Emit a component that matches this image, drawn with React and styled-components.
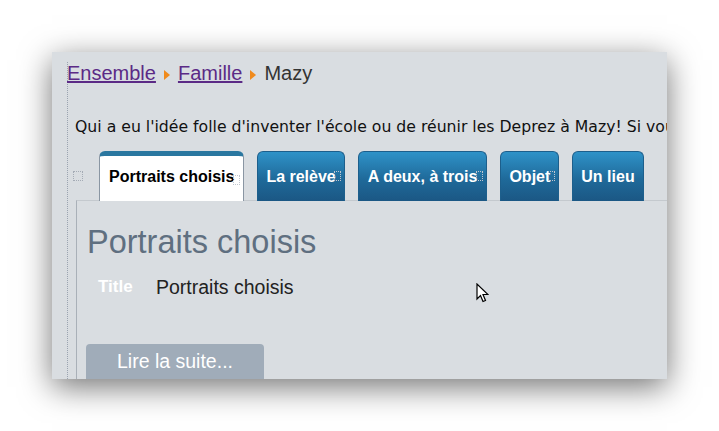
import React from "react";
import styled, { createGlobalStyle } from "styled-components";

const GlobalStyle = createGlobalStyle`
  html, body {
    margin: 0;
    padding: 0;
    background: #ffffff;
  }
  body {
    font-family: "Liberation Sans", Arial, sans-serif;
  }
`;

const Stage = styled.div`
  width: 719px;
  height: 431px;
  padding: 52px 0 0 52px;
  box-sizing: border-box;
  position: relative;
`;

const Window = styled.div`
  width: 615px;
  height: 327px;
  background: #d9dde1;
  box-shadow: 0 8px 30px rgba(0, 0, 0, 0.55);
  overflow: hidden;
  padding: 10px 0 0 15px;
  box-sizing: border-box;
`;

const Page = styled.div`
  border-left: 1px dotted #9aa3b0;
  height: 100%;
  display: flex;
  flex-direction: column;
`;

const Breadcrumb = styled.nav`
  display: flex;
  align-items: center;
  gap: 8px;
  font-size: 20px;
  line-height: 22px;
  color: #333;
  margin-left: -1px;
`;

const Crumb = styled.a`
  color: #5b2a86;
  text-decoration: underline;
`;

const Arrow = styled.span`
  width: 0;
  height: 0;
  border-top: 5px solid transparent;
  border-bottom: 5px solid transparent;
  border-left: 6px solid #f08a1c;
  margin-top: 3px;
`;

const Intro = styled.p`
  margin: 33px 0 0 7px;
  font-family: "DejaVu Sans", Verdana, sans-serif;
  font-size: 15.7px;
  line-height: 19px;
  color: #111;
  white-space: nowrap;
`;

const TabRow = styled.div`
  display: flex;
  align-items: flex-end;
  margin-top: 15px;
  position: relative;
  z-index: 1;
  height: 50px;
`;

const Handle = styled.span`
  width: 8px;
  height: 8px;
  border: 1px dotted #a4abb5;
  align-self: center;
  margin: 0 16px 0 5px;
`;

const Tab = styled.div`
  position: relative;
  height: 50px;
  box-sizing: border-box;
  display: flex;
  align-items: center;
  padding: 0 ${(p) => p.$pad || 9}px;
  margin-right: 13px;
  border-radius: 6px 6px 0 0;
  font-size: 16px;
  font-weight: bold;
  white-space: nowrap;
  color: ${(p) => (p.$active ? "#000" : "#fff")};
  background: ${(p) =>
    p.$active ? "#ffffff" : "linear-gradient(#2f92c8, #1f6a9a 55%, #1b5784)"};
  border: 1px solid ${(p) => (p.$active ? "#8a96a3" : "#1d5f8c")};
  border-top: ${(p) => (p.$active ? "5px solid #2a77a0" : "1px solid #1d5f8c")};
  border-bottom: none;
  padding-bottom: ${(p) => (p.$active ? "3px" : "0")};
`;

const TabHandle = styled.span`
  position: absolute;
  right: 3px;
  top: 19px;
  width: 5px;
  height: 8px;
  border: 1px dotted #c0c6cf;
`;

const Content = styled.section`
  margin: -1px 0 0 8px;
  border-left: 1px solid #a9b0b8;
  border-top: 1px solid #c4c9ce;
  padding: 23px 0 0 10px;
  flex: 1;
`;

const Heading = styled.h1`
  margin: 0;
  font-size: 32.5px;
  line-height: 36px;
  font-weight: normal;
  color: #5f6f80;
`;

const FieldRow = styled.div`
  display: flex;
  align-items: baseline;
  margin: 16px 0 0 11px;
`;

const FieldLabel = styled.span`
  font-size: 17px;
  font-weight: bold;
  color: #fff;
  width: 58px;
  position: relative;
  top: -2px;
`;

const FieldValue = styled.span`
  font-size: 19.5px;
  color: #222;
`;

const ReadMore = styled.button`
  margin-top: 45px;
  width: 178px;
  height: 40px;
  border: none;
  border-radius: 4px;
  background: #a0acb9;
  color: #fff;
  font-family: "Liberation Sans", Arial, sans-serif;
  font-size: 19.5px;
  padding: 0 0 5px;
  margin-left: -1px;
  text-align: center;
`;

const Cursor = styled.svg`
  position: absolute;
  left: 476px;
  top: 283px;
`;

const tabs = [
  { label: "Portraits choisis", active: true, handle: true, pad: 9 },
  { label: "La relève", handle: true, pad: 8 },
  { label: "A deux, à trois", handle: true, pad: 9 },
  { label: "Objet", handle: true, pad: 8 },
  { label: "Un lieu", pad: 8 },
];

export default function App() {
  return (
    <Stage>
      <GlobalStyle />
      <Window>
        <Page>
          <Breadcrumb>
            <Crumb href="#">Ensemble</Crumb>
            <Arrow />
            <Crumb href="#">Famille</Crumb>
            <Arrow />
            <span>Mazy</span>
          </Breadcrumb>
          <Intro>
            Qui a eu l'idée folle d'inventer l'école ou de réunir les Deprez à
            Mazy! Si vous avez des photos, partagez-les avec nous.
          </Intro>
          <TabRow>
            <Handle />
            {tabs.map((t) => (
              <Tab key={t.label} $active={t.active} $pad={t.pad}>
                {t.label}
                {t.handle && <TabHandle />}
              </Tab>
            ))}
          </TabRow>
          <Content>
            <Heading>Portraits choisis</Heading>
            <FieldRow>
              <FieldLabel>Title</FieldLabel>
              <FieldValue>Portraits choisis</FieldValue>
            </FieldRow>
            <ReadMore>Lire la suite...</ReadMore>
          </Content>
        </Page>
      </Window>
      <Cursor width="13" height="21" viewBox="0 0 13 21">
        <path
          d="M1 1 L1 16 L4.5 12.5 L7 18.5 L9.5 17.5 L7 11.5 L12 11.5 Z"
          fill="#fff"
          stroke="#000"
          strokeWidth="1.2"
          strokeLinejoin="miter"
        />
      </Cursor>
    </Stage>
  );
}
